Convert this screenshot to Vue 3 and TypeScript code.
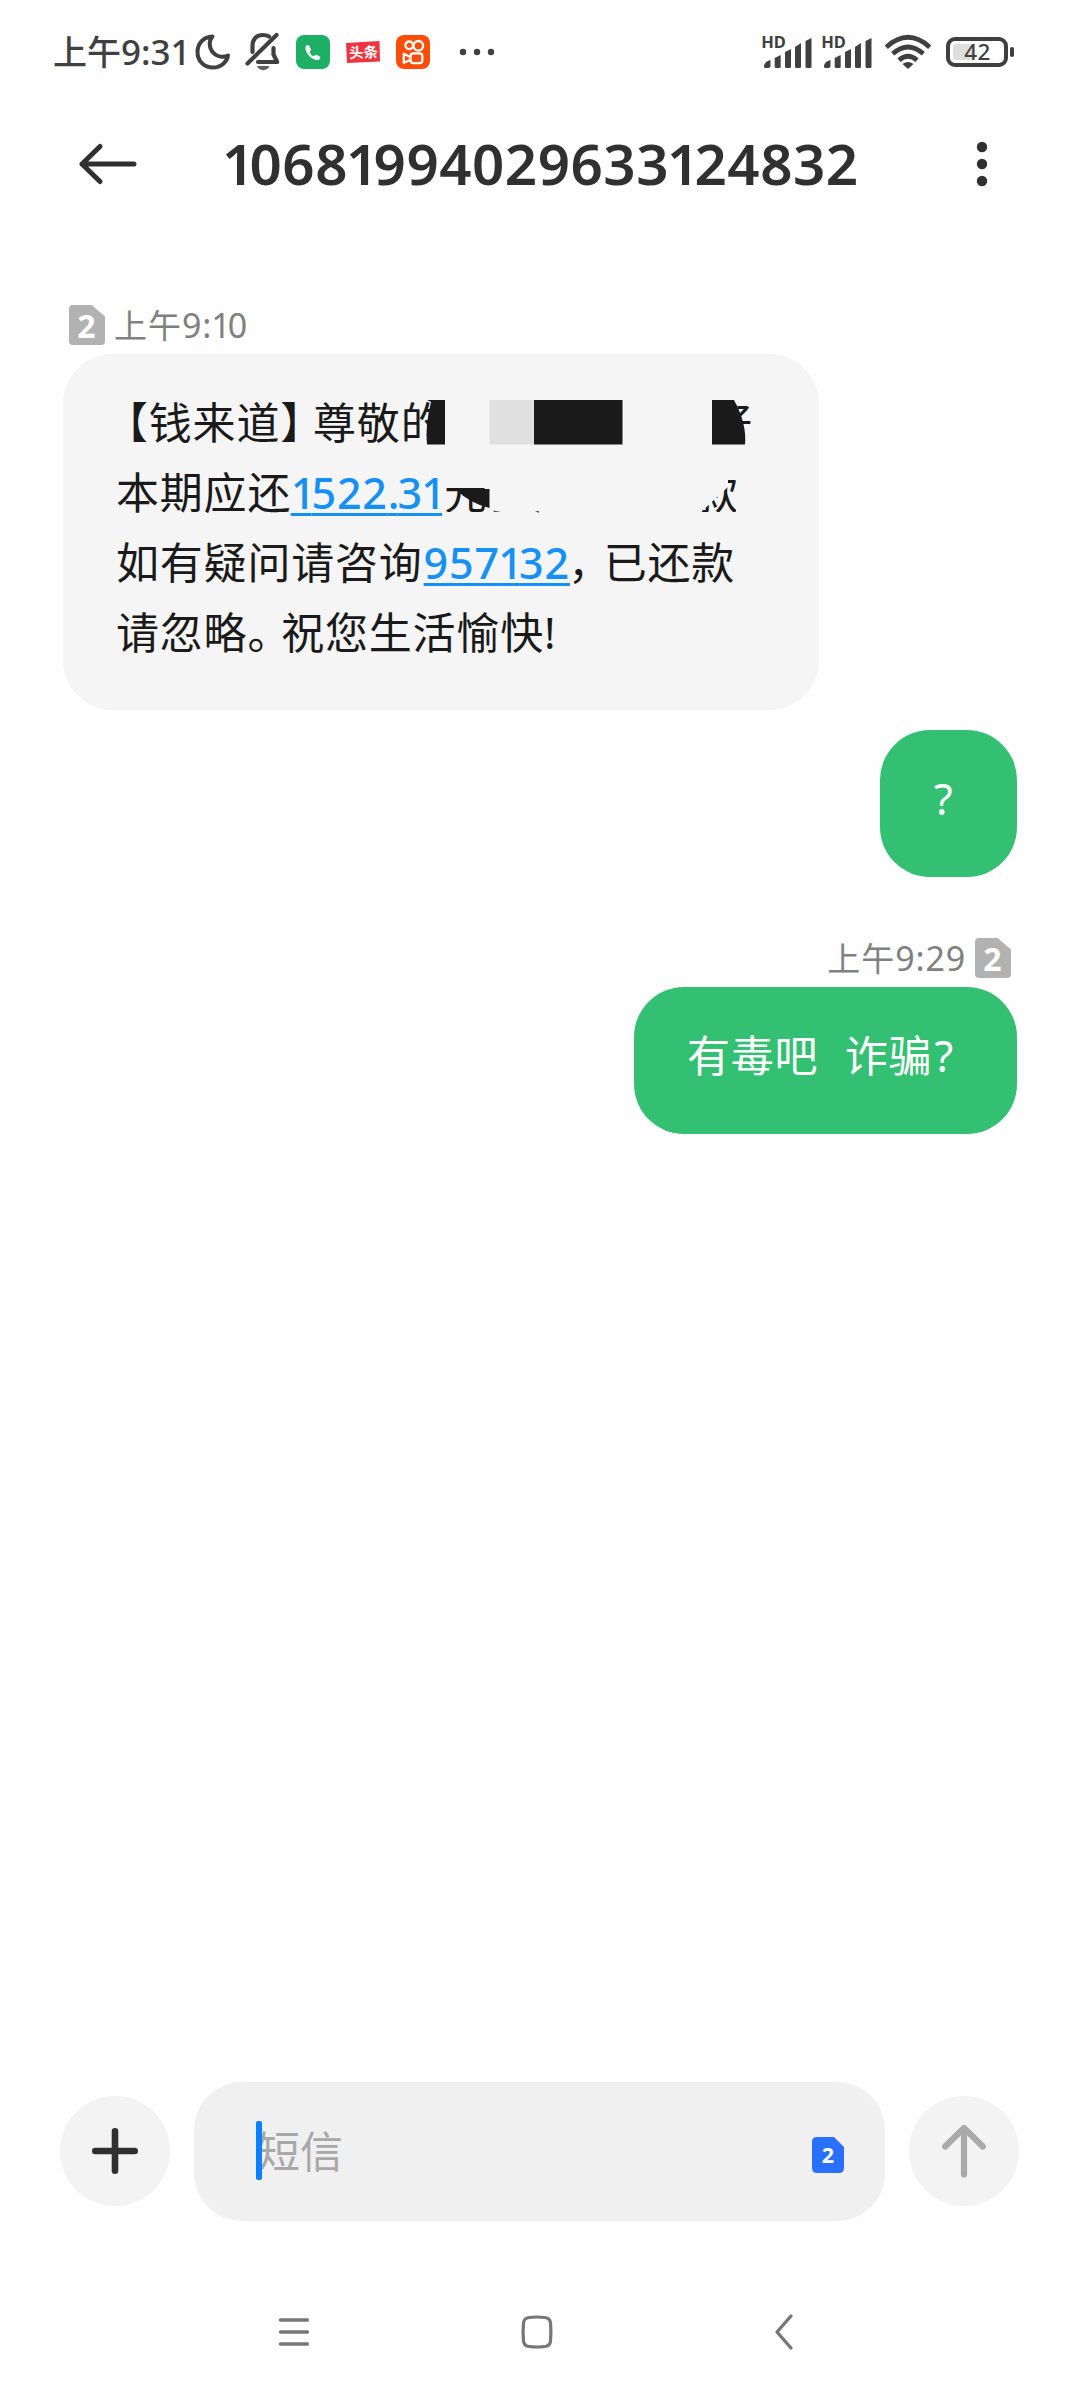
<script setup lang="ts">
interface Sim {
  id: string
  label: string
}

const sender = '10681994029633124832'
const digits: string[] = sender.split('')
const sim: Sim = { id: 'sim2', label: '2' }
</script>

<template>
  <div class="screen">
    <header class="status">
      <span class="clock">上午<span class="clock-num">9:31</span></span>
      <svg class="moon" width="36" height="38" viewBox="0 0 36 38">
        <path d="M17.500 3.500C8 4 2.500 11 2.500 19C2.500 28 9 34.500 18 34.500C26 34.500 32 29 33 22.500C29 25 22 24 18 19.500C14 15 13.500 8 17.500 3.500Z" fill="none" stroke="#404040" stroke-width="4" stroke-linejoin="round" />
      </svg>
      <svg class="bell" width="36" height="40" viewBox="0 0 36 40">
        <g fill="none" stroke="#404040" stroke-width="4.200" stroke-linecap="round" stroke-linejoin="round">
          <path d="M2.500 31.500L31.500 3" />
          <path d="M7.500 20V14C7.500 7 11.500 3 18 3C20.500 3 22.500 3.500 24 4.500" />
          <path d="M28.500 16V22.500L32.200 30H13" />
        </g>
        <path d="M12 34H24.500C23 39.500 13.500 39.500 12 34Z" fill="#606060" />
      </svg>
      <svg class="app" width="34" height="34" viewBox="0 0 34 34">
        <rect width="34" height="34" rx="8" fill="#1db065" />
        <path d="M9.500 11.500C10 10.500 12 9.500 13 10.500L15 14.500C15 16 13.500 16 13.800 17.500C14.500 19.500 16 20.800 17.500 21C19 20.500 19.300 19.500 20.500 19.700L24 21.700C25 23 23.500 24.800 22 25C16 25.500 8.500 18 9.500 11.500Z" fill="#fff" />
      </svg>
      <svg class="app" width="34" height="34" viewBox="0 0 34 34">
        <path d="M0 8L33.500 6L34 26.500L1 28Z" fill="#ee3440" />
        <text x="3" y="22.800" font-size="14.500" font-weight="700" fill="#fff" transform="rotate(-2 17 17)">头条</text>
      </svg>
      <svg class="app" width="34" height="34" viewBox="0 0 34 34">
        <rect width="34" height="34" rx="8" fill="#fa4d08" />
        <g fill="none" stroke="#fff" stroke-width="2.300">
          <circle cx="13.200" cy="10.300" r="3.800" />
          <circle cx="22.300" cy="10.800" r="4.800" />
          <rect x="14.500" y="18.300" width="11.800" height="9.800" rx="2.800" />
          <path d="M14.300 22L7.800 18.800V27.800L14.300 25" stroke-linejoin="round" />
        </g>
      </svg>
      <svg class="more" width="36" height="10" viewBox="0 0 36 10">
        <circle cx="5" cy="5" r="3.200" fill="#404040" />
        <circle cx="19" cy="5" r="3.200" fill="#404040" />
        <circle cx="33" cy="5" r="3.200" fill="#404040" />
      </svg>
      <div class="spacer"></div>
      <svg v-for="n in 2" :key="n" class="signal" width="52" height="40" viewBox="0 -4 52 40">
        <text x="-0.800" y="14" font-size="16.500" font-weight="700" fill="#404040">HD</text>
        <g fill="#404040">
          <path d="M2 32.500C2 29 5 27 8.500 26V31.500Q8.500 34 6 34H3.500Q2 34 2 32.500Z" />
          <path d="M12.700 24L18.700 21V32.500Q18.700 34 17.200 34H14.200Q12.700 34 12.700 32.500Z" />
          <path d="M23 18L29 15V32.500Q29 34 27.500 34H24.500Q23 34 23 32.500Z" />
          <path d="M33 13L39 9V32.500Q39 34 37.500 34H34.500Q33 34 33 32.500Z" />
          <path d="M43.500 7L49.500 4V32.500Q49.500 34 48 34H45Q43.500 34 43.500 32.500Z" />
        </g>
      </svg>
      <svg class="wifi" width="48" height="36" viewBox="0 0 48 36">
        <g fill="none" stroke="#404040" stroke-width="4.800">
          <path d="M2.300 13.200Q24 -6.500 45.700 13.200" />
          <path d="M8.700 19.800Q24 6 39.300 19.800" />
          <path d="M15 26.200Q24 18.300 33 26.200" />
        </g>
        <path d="M18.500 30Q24 25.800 29.500 30L24 35Z" fill="#404040" />
      </svg>
      <svg class="battery" width="70" height="32" viewBox="0 0 70 32">
        <rect x="2" y="3" width="58" height="26" rx="7" fill="none" stroke="#404040" stroke-width="4" />
        <rect x="7" y="8" width="19" height="16" rx="3" fill="#dedede" />
        <rect x="64" y="11" width="4" height="10" rx="1.800" fill="#404040" />
        <text x="31.500" y="24" text-anchor="middle" font-size="22.500" font-weight="500" letter-spacing="0.500" fill="#404040">42</text>
      </svg>
    </header>

    <div class="titlebar">
      <svg class="back" width="60" height="44" viewBox="0 0 60 44">
        <path d="M56 22H4M22 4.500L4 22L22 39.500" fill="none" stroke="#303030" stroke-width="5" stroke-linecap="round" stroke-linejoin="round" />
      </svg>
      <h1><span v-for="(d, i) in digits" :key="i" :class="{ one: d === '1' }">{{ d }}</span></h1>
      <svg class="kebab" width="12" height="46" viewBox="0 0 12 46">
        <circle cx="6" cy="6" r="5.200" fill="#303030" />
        <circle cx="6" cy="23" r="5.200" fill="#303030" />
        <circle cx="6" cy="40" r="5.200" fill="#303030" />
      </svg>
    </div>

    <main class="thread">
      <div class="meta">
        <svg :key="sim.id" width="36" height="40" viewBox="0 0 36 40">
          <path d="M4 0H22.500L36 11.500V36Q36 40 32 40H4Q0 40 0 36V4Q0 0 4 0Z" fill="#b2b2b2" />
          <text x="17.500" y="33" text-anchor="middle" font-size="32" font-weight="700" fill="#fff">{{ sim.label }}</text>
        </svg>
        <span class="time">上午<span class="time-num">9:<span class="narrow">1</span>0</span></span>
      </div>

      <div class="bubble incoming">
        <p><span class="open">【</span>钱来道<span class="close">】</span>尊敬的</p>
        <p>本期应还<a><span class="narrow">1</span>522<span class="dot">.</span>3<span class="narrow">1</span></a></p>
        <p>如有疑问请咨询<a>957<span class="narrow">1</span>32</a><span class="comma">，</span>已还款</p>
        <p>请忽略<span class="stop">。</span>祝您生活愉快!</p>
        <svg class="redact" width="340" height="130" viewBox="420 390 340 130">
          <defs>
            <clipPath id="clip-a"><path d="M735 400H752V444H745Q745 425 735 400Z" /></clipPath>
            <clipPath id="clip-b"><path d="M445 486H490L502 512H445Z" /></clipPath>
            <clipPath id="clip-c"><path d="M701 512L728 487V479H736V512Z" /></clipPath>
          </defs>
          <path d="M427 400H445V444.500H427Q425 425 431 402Z" fill="#1a1a1a" />
          <rect x="489.500" y="400" width="44.500" height="44.500" fill="#e0e0e0" />
          <rect x="534" y="400" width="88.500" height="44.500" fill="#1a1a1a" />
          <path d="M712 400H734Q747 424 745 444.500H712Z" fill="#1a1a1a" />
          <text x="709" y="438.500" font-size="43" fill="#1a1a1a" clip-path="url(#clip-a)">好</text>
          <text x="444" y="508.500" font-size="43" fill="#1a1a1a" clip-path="url(#clip-b)">元</text>
          <path d="M455 489H489.500V508Q471 504 455 489Z" fill="#1a1a1a" />
          <path d="M493 510.500Q498 511 501 512H494Z M535 511H539V513Z" fill="#555" />
          <text x="695" y="508.500" font-size="43" fill="#1a1a1a" clip-path="url(#clip-c)">款</text>
        </svg>
      </div>

      <div class="bubble outgoing">?</div>

      <div class="meta right">
        <span class="time">上午<span class="time-num">9:29</span></span>
        <svg width="36" height="40" viewBox="0 0 36 40">
          <path d="M4 0H22.500L36 11.500V36Q36 40 32 40H4Q0 40 0 36V4Q0 0 4 0Z" fill="#b2b2b2" />
          <text x="17.500" y="33" text-anchor="middle" font-size="32" font-weight="700" fill="#fff">{{ sim.label }}</text>
        </svg>
      </div>

      <div class="bubble outgoing second">有毒吧<span class="gap">&nbsp;&nbsp;</span>诈骗<span class="mark">?</span></div>
    </main>

    <footer class="composer">
      <button class="round">
        <svg width="46" height="46" viewBox="0 0 46 46">
          <path d="M23 3.300V42.700M3.300 23H42.700" stroke="#303030" stroke-width="6.600" stroke-linecap="round" />
        </svg>
      </button>
      <div class="field">
        <span class="hint">短信<i class="caret"></i></span>
        <svg width="32" height="36" viewBox="0 0 32 36">
          <path d="M5 0H22L32 10V31Q32 36 27 36H5Q0 36 0 31V5Q0 0 5 0Z" fill="#2a70ff" />
          <text x="16" y="26" text-anchor="middle" font-size="21.500" font-weight="700" fill="#fff">{{ sim.label }}</text>
        </svg>
      </div>
      <button class="round">
        <svg width="48" height="56" viewBox="0 0 48 56">
          <path d="M24 51.500V5M5.200 23.500L24 5L42.800 23.500" fill="none" stroke="#aaa" stroke-width="6.200" stroke-linecap="round" stroke-linejoin="round" />
        </svg>
      </button>
    </footer>

    <nav class="navbar">
      <svg width="34" height="34" viewBox="0 0 34 34">
        <path d="M3.500 5H30.500M3.500 17H30.500M3.500 29H30.500" stroke="#777" stroke-width="3.300" stroke-linecap="round" />
      </svg>
      <svg class="home" width="34" height="38" viewBox="0 0 34 38">
        <path d="M9 4.500Q17 3.500 25 4.500Q30 5 30.500 10Q31.300 19 30.500 28Q30 33 25 33.500Q17 34.500 9 33.500Q4 33 3.500 28Q2.700 19 3.500 10Q4 5 9 4.500Z" fill="none" stroke="#777" stroke-width="3.200" />
      </svg>
      <svg width="22" height="38" viewBox="0 0 22 38">
        <path d="M18 3L4 19L18 35" fill="none" stroke="#777" stroke-width="3.400" stroke-linecap="round" stroke-linejoin="round" />
      </svg>
    </nav>
  </div>
</template>

<style>
body {
  margin: 0;
  background: #fefefe;
}
</style>

<style scoped>
.screen {
  width: 1080px;
  height: 2400px;
  box-sizing: border-box;
  display: flex;
  flex-direction: column;
  overflow: hidden;
  background: #fefefe;
  color: #1a1a1a;
  font-family: 'Noto Sans', 'Noto Sans CJK SC', sans-serif;
}
svg {
  display: block;
  flex: none;
  overflow: visible;
}
.status {
  height: 104px;
  padding: 0 64px 0 52px;
  display: flex;
  align-items: center;
  color: #404040;
}
.clock {
  width: 143px;
  padding-left: 1px;
  box-sizing: border-box;
  font-size: 34px;
  font-weight: 500;
  line-height: 60px;
  white-space: nowrap;
}
.clock-num {
  font-size: 35px;
  letter-spacing: 0;
}
.moon {
  margin-right: 14px;
}
.bell {
  margin-right: 15px;
}
.app {
  margin-right: 16px;
}
.more {
  margin-left: 12px;
}
.spacer {
  flex: 1;
}
.signal {
  margin: -4px 8px 0 0;
}
.wifi {
  margin-left: 2px;
  margin-right: 14px;
}
.titlebar {
  height: 120px;
  padding: 0 92px 0 78px;
  display: flex;
  align-items: center;
}
h1 {
  flex: 1;
  margin: 0 0 0 86px;
  font-size: 56.500px;
  line-height: 80px;
  font-weight: 600;
  color: #303030;
  white-space: nowrap;
  letter-spacing: 0.500px;
}
h1 .one {
  margin-left: -2px;
  letter-spacing: -4.800px;
}
.thread {
  flex: 1;
  padding: 77px 63px 0;
  display: flex;
  flex-direction: column;
  align-items: flex-start;
}
.meta {
  height: 48px;
  padding-left: 6px;
  display: flex;
  align-items: center;
  gap: 9px;
  color: #808080;
}
.meta.right {
  align-self: flex-end;
  margin-top: 57px;
  padding: 0 6px 0 0;
}
.time {
  font-size: 33px;
  line-height: 48px;
  letter-spacing: 1px;
  white-space: nowrap;
  font-weight: 400;
}
.time-num {
  font-size: 34px;
  letter-spacing: 0.8px;
}
.narrow {
  margin-left: -1.5px;
  letter-spacing: -3.8px;
}
.time .narrow {
  margin-left: -1px;
  letter-spacing: -3px;
}
.dot {
  letter-spacing: -2px;
}
.bubble {
  position: relative;
  box-sizing: border-box;
  border-radius: 50px;
  font-size: 43px;
  line-height: 70px;
  letter-spacing: 0.8px;
  white-space: nowrap;
}
.incoming {
  width: 756px;
  height: 356px;
  margin-top: 5px;
  padding: 34px 53px 42px;
  background: #f5f5f5;
}
.incoming p {
  margin: 0;
  height: 70px;
}
.incoming a {
  margin-left: 1px;
  color: #1590f5;
  font-weight: 500;
  text-decoration: underline;
  text-decoration-thickness: 3px;
  text-underline-offset: 4px;
}
.open {
  margin-left: -11px;
}
.close {
  margin-right: -11px;
}
.stop {
  margin-right: -10px;
}
.comma {
  margin-left: -2px;
  margin-right: -8px;
}
.redact {
  position: absolute;
  left: 357px;
  top: 36px;
}
.outgoing {
  align-self: flex-end;
  width: 137px;
  height: 147px;
  margin-top: 20px;
  padding: 34px 0 0 54px;
  background: #34c073;
  color: #fff;
}
.outgoing.second {
  width: 383px;
  margin-top: 5px;
  padding-left: 53px;
}
.gap {
  letter-spacing: 2px;
}
.mark {
  margin-left: 2px;
}
.composer {
  height: 140px;
  padding: 0 61px 0 60px;
  margin-bottom: 60px;
  display: flex;
  align-items: center;
  justify-content: space-between;
}
.round {
  width: 110px;
  height: 110px;
  padding: 0;
  border: 0;
  border-radius: 50%;
  background: #f3f3f3;
  display: flex;
  align-items: center;
  justify-content: center;
}
.field {
  width: 691px;
  height: 139px;
  box-sizing: border-box;
  padding: 8px 41px 0 63px;
  border-radius: 48px;
  background: #f0f0f0;
  display: flex;
  align-items: center;
  justify-content: space-between;
}
.hint {
  position: relative;
  margin-top: -6px;
  font-size: 43px;
  line-height: 60px;
  color: #a8a8a8;
}
.caret {
  position: absolute;
  left: -1px;
  top: -1px;
  width: 6px;
  height: 59px;
  border-radius: 2px;
  background: #0a80ff;
}
.home {
  margin-right: 10px;
}
.navbar {
  height: 119px;
  padding: 0 285px 17px 277px;
  box-sizing: border-box;
  display: flex;
  align-items: center;
  justify-content: space-between;
}
</style>
